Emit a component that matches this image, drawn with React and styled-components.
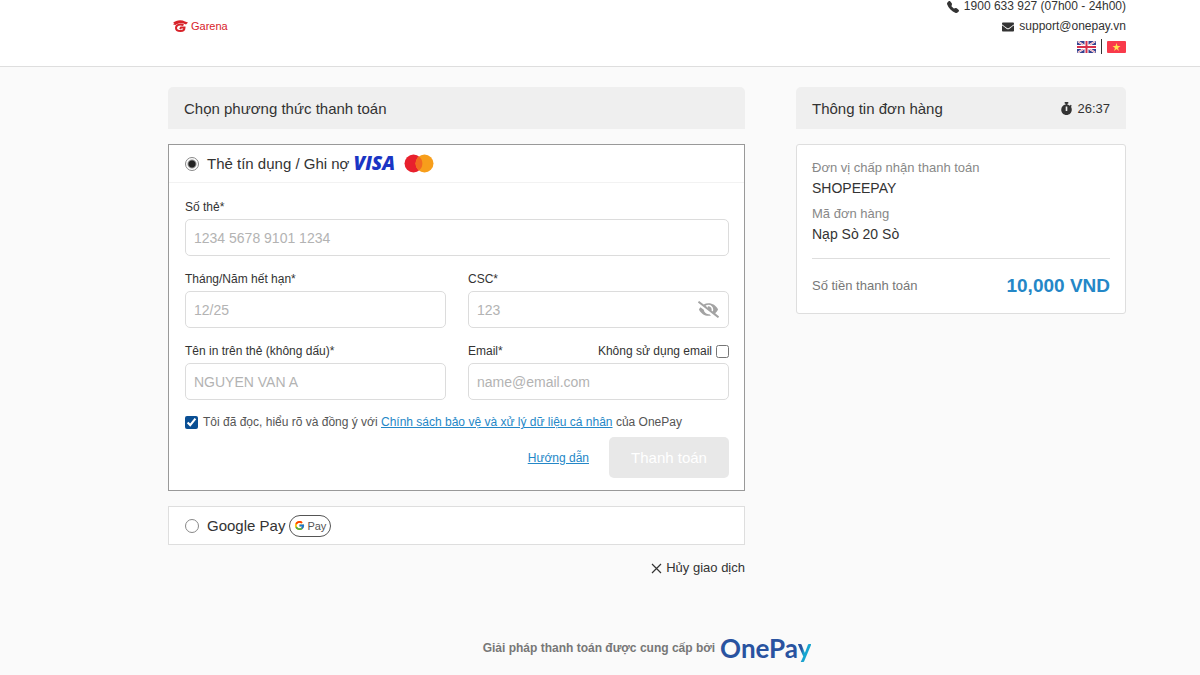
import { useState } from 'react';
import styled, { createGlobalStyle } from 'styled-components';
import { BsTelephoneFill } from 'react-icons/bs';
import { FaEnvelope, FaEyeSlash, FaStopwatch } from 'react-icons/fa';
import { FcGoogle } from 'react-icons/fc';

const GlobalStyle = createGlobalStyle`
	* {
		box-sizing: border-box;
	}

	body {
		margin: 0;
		background-color: #fafafa;
		color: #333;
		font-family: 'Liberation Sans', Arial, sans-serif;
		font-size: 13px;
	}

	input,
	button {
		font-family: inherit;
	}
`;

const Header = styled.header`
	display: flex;
	justify-content: space-between;
	align-items: flex-start;
	padding: 0 74px 13px 173px;
	background-color: #fff;
	border-bottom: 1px solid #dedede;
`;

const Brand = styled.a`
	display: flex;
	align-items: center;
	gap: 3px;
	padding-top: 19px;
	color: #d8232a;
	font-size: 11px;
	line-height: 14px;
	text-decoration: none;
`;

const Contact = styled.div`
	display: grid;
	justify-items: end;
	gap: 7px;
`;

const ContactLine = styled.a`
	display: flex;
	align-items: center;
	gap: 5px;
	color: #333;
	font-size: 12px;
	line-height: 13px;
	text-decoration: none;
`;

const Languages = styled.div`
	display: flex;
	align-items: center;
	gap: 5px;
	height: 13px;
`;

const FlagButton = styled.button`
	display: flex;
	padding: 0;
	border: none;
	background: none;
`;

const Separator = styled.span`
	width: 1px;
	height: 15px;
	background-color: #333;
`;

const Main = styled.main`
	display: grid;
	grid-template-columns: 577fr 330fr;
	gap: 51px;
	align-items: start;
	padding: 20px 74px 0 168px;
`;

const Title = styled.div`
	display: flex;
	justify-content: space-between;
	align-items: center;
	height: 42px;
	margin-bottom: 15px;
	padding: 0 16px;
	border-radius: 5px 5px 0 0;
	background-color: #efefef;
`;

const Heading = styled.h1`
	margin: 0;
	font-size: 15px;
	font-weight: 400;
`;

const Timer = styled.span`
	display: flex;
	align-items: center;
	gap: 4px;
`;

const Panel = styled.section`
	margin-bottom: 15px;
	border: 1px solid ${props => (props.$active ? '#999' : '#dedede')};
	background-color: #fff;
`;

const Method = styled.label`
	display: flex;
	align-items: center;
	gap: 4px;
	height: 37px;
	padding: 0 16px;
	font-size: 15px;
`;

const Radio = styled.input`
	appearance: none;
	flex: none;
	width: 14px;
	height: 14px;
	margin: 0 4px 0 0;
	border: 1px solid #888;
	border-radius: 50%;

	&:checked {
		background: radial-gradient(circle, #222 3px, #fff 5px);
	}
`;

const Visa = styled.span`
	padding-bottom: 2px;
	margin-right: 5px;
	color: #1a35c4;
	font-family: 'Open Sans', sans-serif;
	font-size: 19px;
	font-style: italic;
	font-weight: 800;
	line-height: 20px;
`;

const GooglePay = styled.span`
	display: flex;
	align-items: center;
	justify-content: center;
	gap: 2px;
	width: 42px;
	height: 22px;
	border: 1px solid #555;
	border-radius: 11px;
	color: #555;
	font-size: 11px;
`;

const Form = styled.form`
	display: grid;
	grid-template-columns: 1fr 1fr;
	column-gap: 22px;
	row-gap: 14px;
	padding: 15px 15px 12px 16px;
	border-top: 1px solid #f2f2f2;
`;

const Field = styled.div`
	position: relative;
	grid-column: ${props => (props.$wide ? '1 / -1' : 'auto')};
`;

const LabelRow = styled.div`
	display: flex;
	justify-content: space-between;
	align-items: center;
	height: 18px;
	margin-bottom: 3px;
	font-size: 12px;
`;

const CheckLabel = styled.label`
	display: flex;
	align-items: center;
	gap: 4px;
`;

const Checkbox = styled.input`
	flex: none;
	width: 13px;
	height: 13px;
	margin: 0;
	accent-color: #0a4f94;
`;

const TextInput = styled.input`
	display: block;
	width: 100%;
	height: 37px;
	padding: 0 8px;
	border: 1px solid #dcdcdc;
	border-radius: 5px;
	background-color: #fff;
	font-size: 14px;

	&::placeholder {
		color: #b3b3b3;
	}
`;

const RevealButton = styled.button`
	position: absolute;
	right: 10px;
	bottom: 8px;
	display: flex;
	padding: 0;
	border: none;
	background: none;
	color: #a3a3a3;
`;

const Terms = styled.div`
	display: flex;
	align-items: center;
	gap: 5px;
	grid-column: 1 / -1;
	height: 16px;
	color: #555;
	font-size: 12px;
`;

const Link = styled.a`
	color: #2487c7;
	font-size: 12px;
	text-decoration: underline;
`;

const Actions = styled.div`
	display: flex;
	justify-content: flex-end;
	align-items: center;
	gap: 20px;
	grid-column: 1 / -1;
	margin-top: -7px;
`;

const PayButton = styled.button`
	width: 120px;
	height: 41px;
	border: none;
	border-radius: 5px;
	background-color: #e8e8e8;
	color: #fff;
	font-size: 15px;
`;

const CancelButton = styled.button`
	display: flex;
	align-items: center;
	gap: 4px;
	margin-left: auto;
	padding: 0;
	border: none;
	background: none;
	color: #333;
	font-size: 13px;
	line-height: 16px;
`;

const Order = styled.section`
	padding: 14px 15px 15px;
	border: 1px solid #dedede;
	border-radius: 3px;
	background-color: #fff;
`;

const OrderList = styled.dl`
	margin: 0;
	padding-bottom: 7px;
	border-bottom: 1px solid #dedede;
`;

const Term = styled.dt`
	color: #888;
	line-height: 18px;
`;

const Detail = styled.dd`
	margin: 0 0 6px;
	font-size: 14px;
	line-height: 22px;
`;

const Total = styled.div`
	display: flex;
	justify-content: space-between;
	align-items: center;
	padding-top: 15px;
	color: #777;
	line-height: 24px;
`;

const Amount = styled.strong`
	color: #2487c7;
	font-size: 19px;
`;

const Footer = styled.footer`
	display: flex;
	justify-content: center;
	align-items: center;
	gap: 5px;
	padding: 57px 74px 0 168px;
	color: #777;
	font-size: 12px;
	font-weight: 700;
`;

const OnePay = styled.span`
	color: #2953a0;
	font-family: Lato, sans-serif;
	font-size: 26px;
	font-weight: 700;
	line-height: 30px;
`;

const LastLetter = styled.span`
	background: linear-gradient(100deg, #2953a0 35%, #16a5d0 50%);
	background-clip: text;
	color: transparent;
`;

function GarenaMark() {
	return (
		<svg width='15' height='12' viewBox='0 0 30 24' aria-hidden='true'>
			<path
				d='M0 6C6 0 17-1 24 3l6 2-4 4C18 5 10 6 5 10L0 9l3-2z'
				fill='#d8232a'
			/>
			<path
				d='M21 10C13 7 6 10 6 16c0 4 4 6 9 6 6 0 8-3 8-7h-7l-2 3'
				fill='none'
				stroke='#d8232a'
				strokeWidth='4'
			/>
		</svg>
	);
}

function BritishFlag() {
	return (
		<svg width='19' height='12' viewBox='0 0 38 24' aria-hidden='true'>
			<rect width='38' height='24' rx='2' fill='#35408f' />
			<path d='M2 1l34 22M36 1L2 23' stroke='#fff' strokeWidth='4' />
			<path d='M2 1l34 22M36 1L2 23' stroke='#d8304a' strokeWidth='1' />
			<path d='M19 0v24M0 12h38' stroke='#fff' strokeWidth='8' />
			<path d='M19 0v24M0 12h38' stroke='#d8304a' strokeWidth='4' />
		</svg>
	);
}

function VietnameseFlag() {
	return (
		<svg width='19' height='12' viewBox='0 0 38 24' aria-hidden='true'>
			<rect width='38' height='24' rx='2' fill='#f93a4b' />
			<path
				d='M19 4l2 6h6l-5 4 2 6-5-4-5 4 2-6-5-4h6z'
				fill='#ffe34d'
			/>
		</svg>
	);
}

function Mastercard() {
	return (
		<svg width='30' height='19' viewBox='0 0 60 38' aria-hidden='true'>
			<circle cx='19' cy='19' r='18' fill='#e8202d' />
			<circle cx='41' cy='19' r='18' fill='#f79e1b' />
			<path d='M30 5a18 18 0 0 1 0 28a18 18 0 0 1 0-28z' fill='#f26a21' />
		</svg>
	);
}

function CardForm() {
	const [accepted, setAccepted] = useState(true);
	const [noEmail, setNoEmail] = useState(false);

	return (
		<Form onSubmit={e => e.preventDefault()}>
			<Field $wide>
				<LabelRow>
					<label htmlFor='number'>Số thẻ*</label>
				</LabelRow>
				<TextInput id='number' placeholder='1234 5678 9101 1234' />
			</Field>
			<Field>
				<LabelRow>
					<label htmlFor='expiry'>Tháng/Năm hết hạn*</label>
				</LabelRow>
				<TextInput id='expiry' placeholder='12/25' />
			</Field>
			<Field>
				<LabelRow>
					<label htmlFor='csc'>CSC*</label>
				</LabelRow>
				<TextInput id='csc' type='password' placeholder='123' />
				<RevealButton type='button' aria-label='CSC'>
					<FaEyeSlash size={21} />
				</RevealButton>
			</Field>
			<Field>
				<LabelRow>
					<label htmlFor='name'>Tên in trên thẻ (không dấu)*</label>
				</LabelRow>
				<TextInput id='name' placeholder='NGUYEN VAN A' />
			</Field>
			<Field>
				<LabelRow>
					<label htmlFor='email'>Email*</label>
					<CheckLabel>
						Không sử dụng email
						<Checkbox
							type='checkbox'
							checked={noEmail}
							onChange={e => setNoEmail(e.target.checked)}
						/>
					</CheckLabel>
				</LabelRow>
				<TextInput id='email' type='email' placeholder='name@email.com' />
			</Field>
			<Terms>
				<Checkbox
					id='terms'
					type='checkbox'
					checked={accepted}
					onChange={e => setAccepted(e.target.checked)}
				/>
				<label htmlFor='terms'>
					Tôi đã đọc, hiểu rõ và đồng ý với{' '}
					<Link href='#policy'>
						Chính sách bảo vệ và xử lý dữ liệu cá nhân
					</Link>{' '}
					của OnePay
				</label>
			</Terms>
			<Actions>
				<Link href='#guide'>Hướng dẫn</Link>
				<PayButton disabled>Thanh toán</PayButton>
			</Actions>
		</Form>
	);
}

function App() {
	const [method, setMethod] = useState('card');

	return (
		<>
			<GlobalStyle />
			<Header>
				<Brand href='#home'>
					<GarenaMark />
					Garena
				</Brand>
				<Contact>
					<ContactLine href='tel:1900633927'>
						<BsTelephoneFill size={12} />
						1900 633 927 (07h00 - 24h00)
					</ContactLine>
					<ContactLine href='mailto:support@onepay.vn'>
						<FaEnvelope size={12} />
						support@onepay.vn
					</ContactLine>
					<Languages>
						<FlagButton aria-label='English'>
							<BritishFlag />
						</FlagButton>
						<Separator />
						<FlagButton aria-label='Tiếng Việt'>
							<VietnameseFlag />
						</FlagButton>
					</Languages>
				</Contact>
			</Header>
			<Main>
				<div>
					<Title>
						<Heading>Chọn phương thức thanh toán</Heading>
					</Title>
					<Panel $active={method === 'card'}>
						<Method>
							<Radio
								type='radio'
								name='method'
								checked={method === 'card'}
								onChange={() => setMethod('card')}
							/>
							Thẻ tín dụng / Ghi nợ
							<Visa>VISA</Visa>
							<Mastercard />
						</Method>
						<CardForm />
					</Panel>
					<Panel $active={method === 'google'}>
						<Method>
							<Radio
								type='radio'
								name='method'
								checked={method === 'google'}
								onChange={() => setMethod('google')}
							/>
							Google Pay
							<GooglePay>
								<FcGoogle size={11} />
								Pay
							</GooglePay>
						</Method>
					</Panel>
					<CancelButton>
						<svg width='11' height='11' viewBox='0 0 11 11' aria-hidden='true'>
							<path d='M1 1l9 9M10 1l-9 9' stroke='#333' strokeWidth='1.2' />
						</svg>
						Hủy giao dịch
					</CancelButton>
				</div>
				<aside>
					<Title>
						<Heading as='h2'>Thông tin đơn hàng</Heading>
						<Timer>
							<FaStopwatch size={13} />
							26:37
						</Timer>
					</Title>
					<Order>
						<OrderList>
							<Term>Đơn vị chấp nhận thanh toán</Term>
							<Detail>SHOPEEPAY</Detail>
							<Term>Mã đơn hàng</Term>
							<Detail>Nạp Sò 20 Sò</Detail>
						</OrderList>
						<Total>
							Số tiền thanh toán
							<Amount>10,000 VND</Amount>
						</Total>
					</Order>
				</aside>
			</Main>
			<Footer>
				Giải pháp thanh toán được cung cấp bởi
				<OnePay>
					OnePa<LastLetter>y</LastLetter>
				</OnePay>
			</Footer>
		</>
	);
}

export default App;
